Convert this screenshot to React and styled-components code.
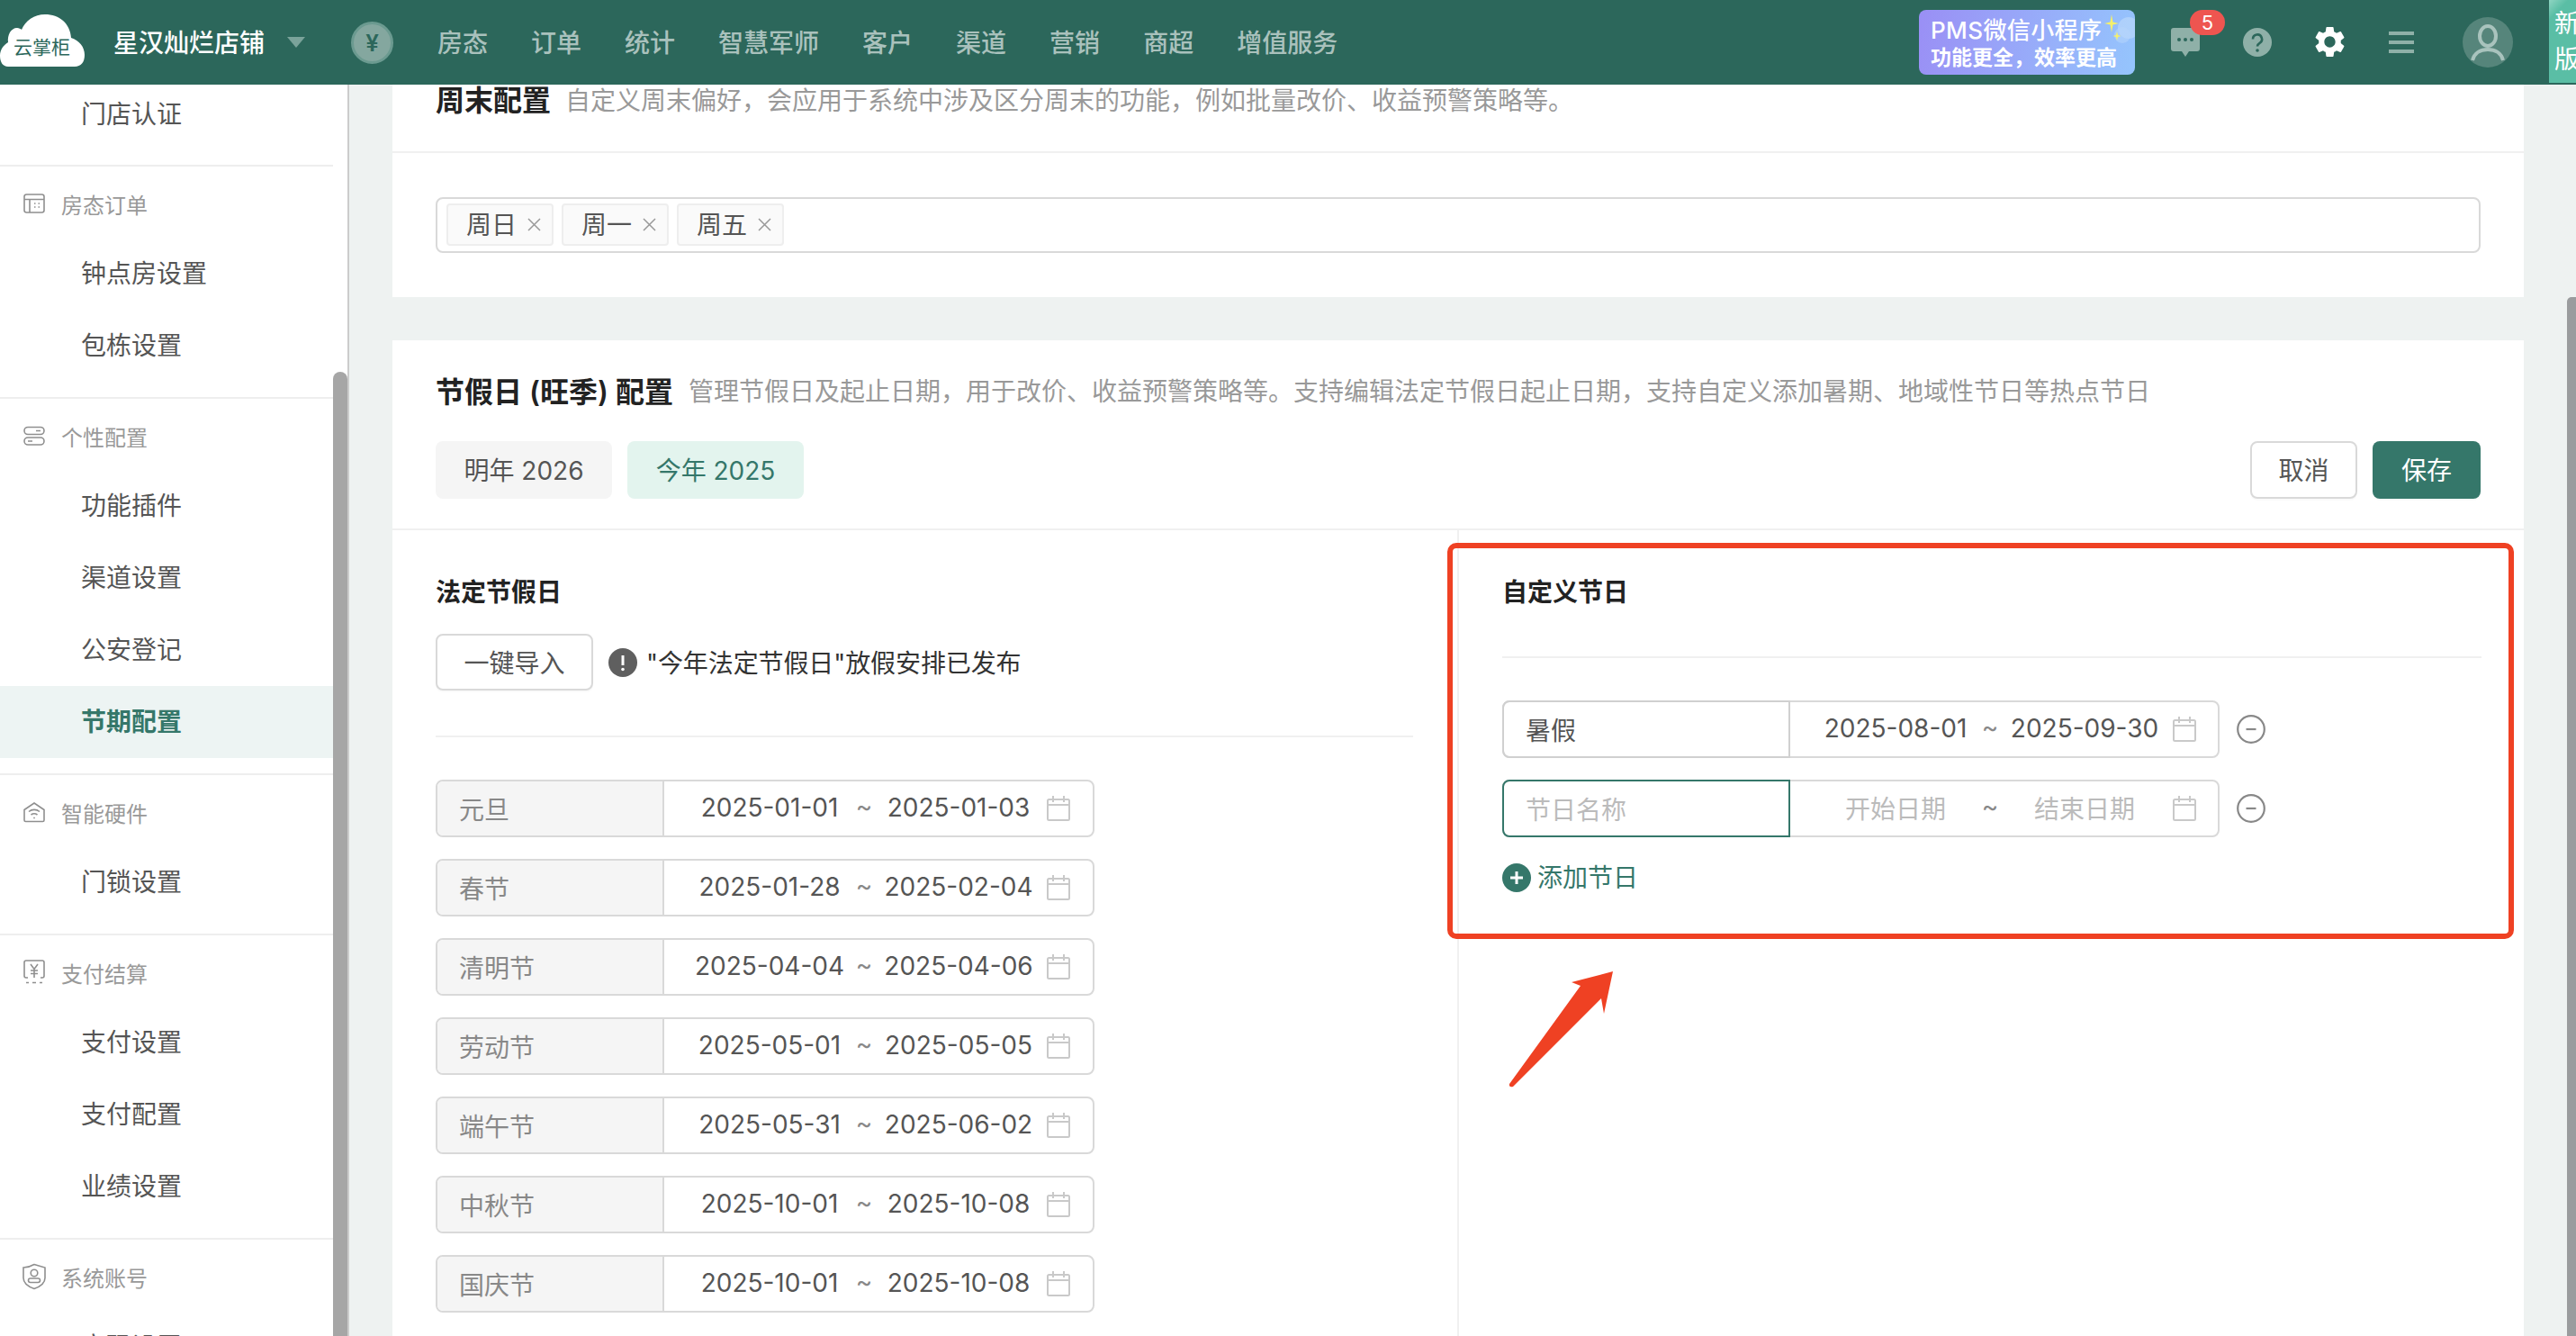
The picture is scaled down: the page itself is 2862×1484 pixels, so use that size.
import styled, { createGlobalStyle } from "styled-components";
import { MdSettings } from "react-icons/md";

const NAV_ITEMS = ["房态", "订单", "统计", "智慧军师", "客户", "渠道", "营销", "商超", "增值服务"];

const HOLIDAYS = [
  { name: "元旦", start: "2025-01-01", end: "2025-01-03" },
  { name: "春节", start: "2025-01-28", end: "2025-02-04" },
  { name: "清明节", start: "2025-04-04", end: "2025-04-06" },
  { name: "劳动节", start: "2025-05-01", end: "2025-05-05" },
  { name: "端午节", start: "2025-05-31", end: "2025-06-02" },
  { name: "中秋节", start: "2025-10-01", end: "2025-10-08" },
  { name: "国庆节", start: "2025-10-01", end: "2025-10-08" },
];

const TableIcon = () => (
  <svg width="24" height="24" viewBox="0 0 24 24" fill="none" stroke="#8f8f8f" strokeWidth="1.6">
    <rect x="1" y="2" width="22" height="20" rx="2.5" />
    <path d="M1 7.5h22M7 7.5V22" />
    <path d="M12 12h1.5M16.5 12H18M12 16h1.5M16.5 16H18" />
  </svg>
);

const ToggleIcon = () => (
  <svg width="24" height="24" viewBox="0 0 24 24" fill="none" stroke="#8f8f8f" strokeWidth="1.6">
    <rect x="1" y="2.5" width="22" height="8" rx="4" />
    <rect x="1" y="14" width="22" height="8" rx="4" />
    <path d="M14 6.5h5M5 18h5" />
  </svg>
);

const WifiHomeIcon = () => (
  <svg width="24" height="24" viewBox="0 0 24 24" fill="none" stroke="#8f8f8f" strokeWidth="1.6">
    <path d="M1 9.5 12 2l11 7.5V21a1.5 1.5 0 0 1-1.5 1.5h-19A1.5 1.5 0 0 1 1 21z" />
    <path d="M6 11.5c3.500-2.800 8.500-2.800 12 0M8.500 15c2.200-1.600 4.800-1.600 7 0" />
    <path d="M11.200 18.500h1.600" />
  </svg>
);

const YenScreenIcon = () => (
  <svg width="24" height="28" viewBox="0 0 24 28" fill="none" stroke="#8f8f8f" strokeWidth="1.6">
    <path d="M5 20H3a2 2 0 0 1-2-2V3a2 2 0 0 1 2-2h18a2 2 0 0 1 2 2v15a2 2 0 0 1-2 2h-2" />
    <path d="M8 5l4 5.500L16 5M12 10.500V20M8 12h8M8 15.500h8" />
    <path d="M3 25.500h3M10 25.500h4M18 25.500h3" />
  </svg>
);

const ShieldIcon = () => (
  <svg width="26" height="30" viewBox="0 0 26 30" fill="none" stroke="#8f8f8f" strokeWidth="1.6">
    <path d="M13 1.500 25 5v11.500c0 5.500-5 9.500-12 12-7-2.500-12-6.500-12-12V5c5 0 8.500-1.500 12-3.500z" />
    <circle cx="13" cy="11" r="3.800" />
    <rect x="6.500" y="17" width="13" height="4.500" rx="2.200" />
  </svg>
);

const SECTIONS = [
  { title: null, items: ["门店认证"] },
  { title: "房态订单", icon: <TableIcon />, items: ["钟点房设置", "包栋设置"] },
  { title: "个性配置", icon: <ToggleIcon />, items: ["功能插件", "渠道设置", "公安登记", "节期配置"] },
  { title: "智能硬件", icon: <WifiHomeIcon />, items: ["门锁设置"] },
  { title: "支付结算", icon: <YenScreenIcon />, items: ["支付设置", "支付配置", "业绩设置"] },
  { title: "系统账号", icon: <ShieldIcon />, items: ["密码设置"] },
];

const CalendarIcon = () => (
  <svg width="26" height="30" viewBox="0 0 26 30" fill="none" stroke="#c9c9c9" strokeWidth="2">
    <rect x="1" y="5" width="24" height="23" rx="1.500" />
    <path d="M1 11h24M7 1v7M19 1v7" />
  </svg>
);

const MinusIcon = () => (
  <svg width="32" height="32" viewBox="0 0 32 32" fill="none" stroke="#888" strokeWidth="2.200">
    <circle cx="16" cy="16" r="14.800" />
    <path d="M10.500 16h11" />
  </svg>
);

const PlusIcon = () => (
  <svg width="32" height="32" viewBox="0 0 32 32">
    <circle cx="16" cy="16" r="16" fill="#35776a" />
    <path d="M16 9v14M9 16h14" stroke="#fff" strokeWidth="3" />
  </svg>
);

const AlertIcon = () => (
  <svg width="32" height="32" viewBox="0 0 32 32">
    <circle cx="16" cy="16" r="16" fill="#5f5f5f" />
    <path d="M16 8v11" stroke="#fff" strokeWidth="3" />
    <circle cx="16" cy="23.500" r="1.800" fill="#fff" />
  </svg>
);

const CloseIcon = () => (
  <svg width="15" height="15" viewBox="0 0 15 15" fill="none" stroke="#999" strokeWidth="1.500">
    <path d="M1 1l13 13M14 1 1 14" />
  </svg>
);

const ChatIcon = () => (
  <svg width="32" height="32" viewBox="0 0 32 32">
    <path d="M3 0h26a3 3 0 0 1 3 3v20a3 3 0 0 1-3 3h-9l-4 6-4-6H3a3 3 0 0 1-3-3V3a3 3 0 0 1 3-3z" fill="#8fb0a8" />
    <circle cx="9" cy="13" r="2" fill="#2c675b" />
    <circle cx="16" cy="13" r="2" fill="#2c675b" />
    <circle cx="23" cy="13" r="2" fill="#2c675b" />
  </svg>
);

const HelpIcon = () => (
  <svg width="32" height="32" viewBox="0 0 32 32">
    <circle cx="16" cy="16" r="16" fill="#8fb0a8" />
    <path d="M11 12.500a5 5 0 1 1 7.500 4.300c-1.700 1-2.500 2-2.500 3.700" fill="none" stroke="#2c675b" strokeWidth="2.600" />
    <circle cx="16" cy="25" r="1.800" fill="#2c675b" />
  </svg>
);

const MenuIcon = () => (
  <svg width="28" height="24" viewBox="0 0 28 24" fill="#8fb0a8">
    <rect width="28" height="4" />
    <rect y="10" width="28" height="4" />
    <rect y="20" width="28" height="4" />
  </svg>
);

const AvatarIcon = () => (
  <svg width="56" height="56" viewBox="0 0 56 56">
    <circle cx="28" cy="28" r="28" fill="#56857b" />
    <ellipse cx="28" cy="21" rx="9" ry="11" fill="none" stroke="#a9c3bd" strokeWidth="4" />
    <path d="M11 48c2-8 9-12 17-12s15 4 17 12" fill="none" stroke="#a9c3bd" strokeWidth="4" />
  </svg>
);

const CloudLogo = () => (
  <svg width="94" height="58" viewBox="0 0 94 58">
    <path
      d="M9 58C3 58 0 53 0 46c0-7 4-12 9-15-1-8 3-16 10-16 2 0 4 1 5 2C28 7 38 0 50 0c16 0 28 10 29 26 9 3 15 10 15 19 0 8-4 13-11 13z"
      fill="#fff"
    />
  </svg>
);

const Sparkles = () => (
  <svg width="40" height="72" viewBox="0 0 40 72">
    <circle cx="33" cy="20" r="12" fill="#b7d6fb" opacity="0.75" />
    <circle cx="26" cy="28" r="9" fill="#b7d6fb" opacity="0.55" />
    <path d="M14 5l1.500 8.500 6.500 1.500-6.500 1.500L14 25l-1.500-8.500L6 15l6.500-1.500z" fill="#f5f06a" />
    <path d="M20 24l1 4 3.500 1-3.500 1-1 4-1-4-3.500-1 3.500-1z" fill="#f5f06a" />
  </svg>
);

const DateRange = ({ start, end, placeholder }) => (
  <DateCell>
    <DateText $placeholder={placeholder}>{start}</DateText>
    <Tilde>~</Tilde>
    <DateText $placeholder={placeholder}>{end}</DateText>
    <CalendarSlot>
      <CalendarIcon />
    </CalendarSlot>
  </DateCell>
);

const App = () => {
  return (
    <>
      <GlobalStyle />
      <Page>
        <Header>
          <LogoWrap>
            <CloudLogo />
            <LogoText>云掌柜</LogoText>
          </LogoWrap>
          <StoreName>星汉灿烂店铺</StoreName>
          <Caret />
          <YenCoin>¥</YenCoin>
          <Nav>
            {NAV_ITEMS.map((item) => (
              <NavItem key={item}>{item}</NavItem>
            ))}
          </Nav>
          <Tools>
            <Promo>
              <PromoTitle>PMS微信小程序</PromoTitle>
              <PromoSub>功能更全，效率更高</PromoSub>
              <PromoArt>
                <Sparkles />
              </PromoArt>
            </Promo>
            <ChatWrap>
              <ChatIcon />
              <Badge>5</Badge>
            </ChatWrap>
            <HelpIcon />
            <GearWrap>
              <MdSettings size={41} color="#fff" />
            </GearWrap>
            <MenuIcon />
            <AvatarWrap>
              <AvatarIcon />
            </AvatarWrap>
            <NewTab>
              <span>新</span>
              <span>版</span>
            </NewTab>
          </Tools>
        </Header>
        <Body>
          <Sidebar>
            <SideList>
              {SECTIONS.map((section, i) => (
                <SideSection key={i} $last={i === SECTIONS.length - 1}>
                  {section.title && (
                    <SideHead>
                      <SideIcon>{section.icon}</SideIcon>
                      {section.title}
                    </SideHead>
                  )}
                  {section.items.map((item) => (
                    <SideItem key={item} $active={item === "节期配置"}>
                      {item}
                    </SideItem>
                  ))}
                </SideSection>
              ))}
            </SideList>
            <SideThumb />
          </Sidebar>
          <Main>
            <WeekendCard>
              <WeekendHead>
                <CardTitle>周末配置</CardTitle>
                <CardDesc>自定义周末偏好，会应用于系统中涉及区分周末的功能，例如批量改价、收益预警策略等。</CardDesc>
              </WeekendHead>
              <TagBox>
                {["周日", "周一", "周五"].map((tag) => (
                  <Tag key={tag}>
                    {tag}
                    <CloseIcon />
                  </Tag>
                ))}
              </TagBox>
            </WeekendCard>
            <HolidayCard>
              <HolidayHead>
                <TitleRow>
                  <CardTitle>节假日 (旺季) 配置</CardTitle>
                  <CardDesc>
                    管理节假日及起止日期，用于改价、收益预警策略等。支持编辑法定节假日起止日期，支持自定义添加暑期、地域性节日等热点节日
                  </CardDesc>
                </TitleRow>
                <ToolRow>
                  <YearTab>明年 2026</YearTab>
                  <YearTab $active>今年 2025</YearTab>
                  <Actions>
                    <CancelButton>取消</CancelButton>
                    <SaveButton>保存</SaveButton>
                  </Actions>
                </ToolRow>
              </HolidayHead>
              <Columns>
                <LeftColumn>
                  <ColumnTitle>法定节假日</ColumnTitle>
                  <ImportRow>
                    <ImportButton>一键导入</ImportButton>
                    <AlertIcon />
                    <Notice>"今年法定节假日"放假安排已发布</Notice>
                  </ImportRow>
                  <LeftRule />
                  <RowList>
                    {HOLIDAYS.map((h) => (
                      <HolidayRow key={h.name}>
                        <NameCell>{h.name}</NameCell>
                        <DateRange start={h.start} end={h.end} />
                      </HolidayRow>
                    ))}
                  </RowList>
                </LeftColumn>
                <RightColumn>
                  <ColumnTitle>自定义节日</ColumnTitle>
                  <RightRule />
                  <RowList>
                    <CustomRow>
                      <HolidayRow>
                        <NameInput>暑假</NameInput>
                        <DateRange start="2025-08-01" end="2025-09-30" />
                      </HolidayRow>
                      <MinusIcon />
                    </CustomRow>
                    <CustomRow>
                      <HolidayRow>
                        <NameInput $focused>节日名称</NameInput>
                        <DateRange start="开始日期" end="结束日期" placeholder />
                      </HolidayRow>
                      <MinusIcon />
                    </CustomRow>
                  </RowList>
                  <AddLink>
                    <PlusIcon />
                    添加节日
                  </AddLink>
                  <Callout />
                  <Arrow width="120" height="130" viewBox="0 0 120 130">
                    <path
                      d="M1 126 80 17 70 13 116 1 106 48 103 31 5 129Q0 130 1 126z"
                      fill="#ef4123"
                    />
                  </Arrow>
                </RightColumn>
              </Columns>
            </HolidayCard>
            <MainThumb />
          </Main>
        </Body>
      </Page>
    </>
  );
};

export default App;

const GlobalStyle = createGlobalStyle`
  html, body {
    margin: 0;
    padding: 0;
    height: 100%;
    overflow: hidden;
    background: #eef2f1;
    font-family: Inter, "Noto Sans CJK SC", sans-serif;
    font-size: 28px;
    color: #555;
  }
  * {
    box-sizing: border-box;
  }
`;

const Page = styled.div`
  width: 2862px;
  height: 1484px;
  display: flex;
  flex-direction: column;
  overflow: hidden;
`;

const Header = styled.header`
  height: 94px;
  flex: none;
  background: #2c675b;
  display: flex;
  align-items: center;
`;

const LogoWrap = styled.div`
  position: relative;
  width: 94px;
  height: 58px;
  margin-top: -4px;
  flex: none;
  svg {
    display: block;
  }
`;

const LogoText = styled.span`
  position: absolute;
  left: 15px;
  top: 22px;
  font-size: 21px;
  line-height: 30px;
  color: #2c675b;
  white-space: nowrap;
`;

const StoreName = styled.div`
  margin-left: 32px;
  padding-bottom: 2px;
  color: #fff;
  font-weight: 500;
  white-space: nowrap;
`;

const Caret = styled.div`
  margin-left: 25px;
  width: 0;
  height: 0;
  border-left: 10px solid transparent;
  border-right: 10px solid transparent;
  border-top: 12px solid #7aa39a;
`;

const YenCoin = styled.div`
  margin-left: 51px;
  width: 47px;
  height: 47px;
  border-radius: 50%;
  background: #84a79f;
  border: 3px solid #6b9a90;
  color: #2c675b;
  font-size: 26px;
  font-weight: 600;
  display: flex;
  align-items: center;
  justify-content: center;
`;

const Nav = styled.nav`
  margin-left: 49px;
  padding-bottom: 2px;
  display: flex;
  gap: 48px;
`;

const NavItem = styled.span`
  color: rgba(255, 255, 255, 0.62);
  font-weight: 500;
  white-space: nowrap;
`;

const Tools = styled.div`
  margin-left: auto;
  display: flex;
  align-items: center;
  height: 100%;
  svg {
    display: block;
    flex: none;
  }
`;

const Promo = styled.div`
  position: relative;
  width: 240px;
  height: 72px;
  margin-right: 40px;
  border-radius: 8px;
  background: linear-gradient(100deg, #9a8ff5 0%, #95c5fd 100%);
  color: #fff;
  padding: 6px 0 0 13px;
  overflow: hidden;
`;

const PromoTitle = styled.div`
  font-size: 26px;
  line-height: 34px;
  letter-spacing: 0.4px;
  font-weight: 500;
  white-space: nowrap;
`;

const PromoSub = styled.div`
  font-size: 23px;
  line-height: 26px;
  font-weight: 600;
  white-space: nowrap;
`;

const PromoArt = styled.div`
  position: absolute;
  right: 0;
  top: 0;
`;

const ChatWrap = styled.div`
  position: relative;
  width: 32px;
  height: 32px;
  margin-right: 48px;
  margin-top: -1px;
`;

const Badge = styled.span`
  position: absolute;
  left: 21px;
  top: -20px;
  width: 39px;
  height: 28px;
  border-radius: 14px;
  background: #ee5550;
  color: #fff;
  font-size: 22px;
  line-height: 28px;
  text-align: center;
`;

const GearWrap = styled.div`
  width: 41px;
  margin: 0 45px 0 44px;
  svg {
    margin-top: -2px;
  }
`;

const AvatarWrap = styled.div`
  margin-left: 54px;
  margin-right: 40px;
`;

const NewTab = styled.div`
  width: 30px;
  height: 92px;
  align-self: flex-start;
  background: linear-gradient(135deg, #8fd5c2 0%, #5abea5 18%);
  color: #fff;
  font-size: 28px;
  line-height: 40px;
  padding: 6px 0 0 6px;
  overflow: hidden;
  display: flex;
  flex-direction: column;
  span {
    display: block;
    width: 28px;
  }
`;

const Body = styled.div`
  flex: 1;
  min-height: 0;
  display: flex;
`;

const Sidebar = styled.aside`
  position: relative;
  width: 388px;
  flex: none;
  background: #fff;
  border-right: 2px solid #ccc;
  overflow: hidden;
`;

const SideList = styled.div`
  width: 370px;
  margin-top: -6px;
`;

const SideHead = styled.div`
  height: 34px;
  margin-bottom: 21px;
  padding-left: 26px;
  display: flex;
  align-items: center;
  gap: 18px;
  font-size: 24px;
  color: #999;
`;

const SideIcon = styled.span`
  width: 24px;
  display: flex;
  justify-content: center;
  svg {
    display: block;
    flex: none;
  }
`;

const SideItem = styled.div`
  height: 80px;
  line-height: 80px;
  padding-left: 90px;
  color: ${(p) => (p.$active ? "#35776a" : "#555")};
  font-weight: ${(p) => (p.$active ? 600 : 400)};
  background: ${(p) => (p.$active ? "#edf4f3" : "transparent")};
`;

const SideSection = styled.section`
  padding: 24px 0 17px;
  border-bottom: ${(p) => (p.$last ? "none" : "2px solid #eee")};
  &:first-child {
    padding-top: 0;
    padding-bottom: 15px;
    ${SideItem} {
      line-height: 78px;
    }
  }
`;

const SideThumb = styled.div`
  position: absolute;
  left: 370px;
  top: 319px;
  bottom: -20px;
  width: 16px;
  border-radius: 8px;
  background: #a6a6a6;
`;

const Main = styled.main`
  position: relative;
  flex: 1;
  min-width: 0;
  padding-left: 48px;
  overflow: hidden;
`;

const MainThumb = styled.div`
  position: absolute;
  right: 0;
  top: 236px;
  bottom: -20px;
  width: 10px;
  border-radius: 5px 0 0 5px;
  background: #9a9c9e;
`;

const Card = styled.div`
  width: 2368px;
  background: #fff;
`;

const WeekendCard = styled(Card)`
  height: 236px;
  margin-bottom: 48px;
`;

const WeekendHead = styled.div`
  height: 76px;
  padding-left: 48px;
  border-bottom: 2px solid #f0f0f0;
  display: flex;
  align-items: flex-start;
  gap: 16px;
  line-height: 36px;
`;

const CardTitle = styled.span`
  font-size: 32px;
  font-weight: 600;
  color: #222;
  white-space: nowrap;
`;

const CardDesc = styled.span`
  color: #999;
  white-space: nowrap;
`;

const TagBox = styled.div`
  margin: 49px 48px 0 48px;
  height: 62px;
  border: 2px solid #d9d9d9;
  border-radius: 8px;
  padding-left: 10px;
  padding-bottom: 1px;
  display: flex;
  align-items: center;
  gap: 9px;
`;

const Tag = styled.div`
  width: 119px;
  height: 47px;
  border: 2px solid #eee;
  border-radius: 4px;
  background: #fafafa;
  padding: 0 0 3px 20px;
  display: flex;
  align-items: center;
  gap: 12px;
  color: #555;
  svg {
    flex: none;
    margin-top: 3px;
  }
`;

const HolidayCard = styled(Card)`
  min-height: 1200px;
`;

const HolidayHead = styled.div`
  padding: 36px 48px 33px 48px;
  border-bottom: 2px solid #f0f0f0;
`;

const TitleRow = styled.div`
  display: flex;
  align-items: center;
  gap: 17px;
  height: 38px;
  margin-bottom: 38px;
`;

const ToolRow = styled.div`
  display: flex;
  gap: 17px;
`;

const YearTab = styled.div`
  width: 196px;
  height: 64px;
  padding-bottom: 3px;
  border-radius: 8px;
  display: flex;
  align-items: center;
  justify-content: center;
  background: ${(p) => (p.$active ? "#e3f4ee" : "#f5f5f5")};
  color: ${(p) => (p.$active ? "#35776a" : "#555")};
`;

const Actions = styled.div`
  margin-left: auto;
  display: flex;
  gap: 17px;
`;

const CancelButton = styled.div`
  width: 119px;
  height: 64px;
  padding-bottom: 2px;
  border: 2px solid #d9d9d9;
  border-radius: 8px;
  background: #fff;
  display: flex;
  align-items: center;
  justify-content: center;
  box-shadow: 0 2px 0 rgba(0, 0, 0, 0.02);
`;

const SaveButton = styled.div`
  width: 120px;
  height: 64px;
  padding-bottom: 2px;
  border-radius: 8px;
  background: #35776a;
  color: #fff;
  display: flex;
  align-items: center;
  justify-content: center;
  box-shadow: 0 2px 0 rgba(0, 0, 0, 0.02);
`;

const Columns = styled.div`
  display: grid;
  grid-template-columns: 1183px 1fr;
  min-height: 900px;
`;

const LeftColumn = styled.div`
  padding: 50px 49px 0 48px;
`;

const RightColumn = styled.div`
  position: relative;
  padding: 50px 47px 0 48px;
  border-left: 2px solid #f0f0f0;
`;

const ColumnTitle = styled.div`
  line-height: 38px;
  font-weight: 600;
  color: #222;
`;

const ImportRow = styled.div`
  margin-top: 27px;
  display: flex;
  align-items: center;
  svg {
    flex: none;
    margin: 0 10px 0 17px;
  }
`;

const ImportButton = styled.div`
  width: 175px;
  height: 63px;
  padding-bottom: 2px;
  border: 2px solid #d9d9d9;
  border-radius: 8px;
  display: flex;
  align-items: center;
  justify-content: center;
  box-shadow: 0 2px 0 rgba(0, 0, 0, 0.02);
`;

const Notice = styled.span`
  padding-bottom: 2px;
  color: #333;
  letter-spacing: -0.1px;
  white-space: nowrap;
`;

const LeftRule = styled.div`
  height: 2px;
  background: #f0f0f0;
  margin: 50px 0 47px;
`;

const RightRule = styled.div`
  height: 2px;
  background: #f0f0f0;
  margin: 52px 0 47px;
`;

const RowList = styled.div`
  display: flex;
  flex-direction: column;
  gap: 24px;
`;

const HolidayRow = styled.div`
  flex: none;
  display: flex;
  width: 732px;
  height: 64px;
  border: 2px solid #d9d9d9;
  border-radius: 8px;
`;

const NameCell = styled.div`
  width: 252px;
  flex: none;
  background: #f5f5f5;
  border-right: 2px solid #d9d9d9;
  border-radius: 6px 0 0 6px;
  padding-left: 24px;
  display: flex;
  align-items: center;
  color: #888;
`;

const CustomRow = styled.div`
  display: flex;
  align-items: center;
  gap: 19px;
  ${HolidayRow} {
    width: 797px;
  }
`;

const NameInput = styled.div`
  width: 320px;
  flex: none;
  margin: -2px 0 -2px -2px;
  border: 2px solid ${(p) => (p.$focused ? "#35776a" : "#d0d0d0")};
  border-radius: 8px 0 0 8px;
  padding: 0 0 1px 24px;
  display: flex;
  align-items: center;
  color: ${(p) => (p.$focused ? "#bbb" : "#555")};
`;

const DateCell = styled.div`
  flex: 1;
  display: flex;
  align-items: center;
  padding-left: 32px;
`;

const DateText = styled.span`
  width: 170px;
  padding-bottom: 2px;
  text-align: center;
  white-space: nowrap;
  color: ${(p) => (p.$placeholder ? "#bbb" : "#555")};
`;

const Tilde = styled.span`
  width: 40px;
  padding-bottom: 4px;
  text-align: center;
  font-size: 28px;
  color: #888;
`;

const CalendarSlot = styled.span`
  margin-left: 13px;
  display: flex;
  svg {
    display: block;
  }
`;

const AddLink = styled.div`
  margin-top: 26px;
  line-height: 38px;
  display: flex;
  align-items: center;
  gap: 7px;
  color: #35776a;
`;

const Callout = styled.div`
  position: absolute;
  left: -13px;
  right: 11px;
  top: 14px;
  height: 440px;
  border: 6px solid #ef4123;
  border-radius: 10px;
  pointer-events: none;
`;

const Arrow = styled.svg`
  position: absolute;
  left: 55px;
  top: 489px;
`;
